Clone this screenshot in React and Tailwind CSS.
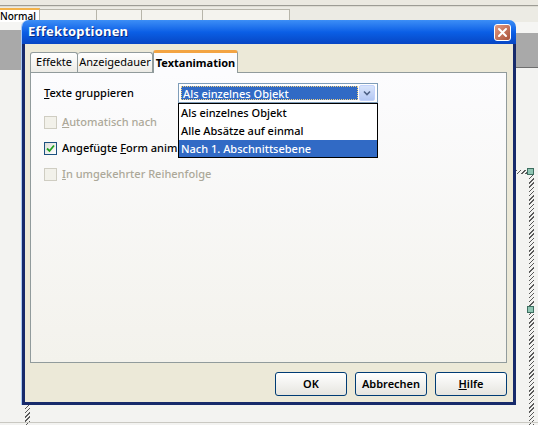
import React from "react";

const hatch =
  "bg-[repeating-linear-gradient(135deg,#5a5a5a_0px,#5a5a5a_1px,transparent_1px,transparent_3px)]";

function Checkbox({ checked, disabled }) {
  return (
    <div
      className={
        "w-[13px] h-[13px] shrink-0 border flex items-center justify-center " +
        (disabled
          ? "border-[#cfcdc2] bg-[#f2f1ea]"
          : "border-[#1c5180] bg-gradient-to-br from-[#dcdcd7] to-white")
      }
    >
      {checked && (
        <svg width="9" height="9" viewBox="0 0 9 9">
          <polyline points="1,4.5 3.5,7 8,1.5" fill="none" stroke="#21a121" strokeWidth="1.8" />
        </svg>
      )}
    </div>
  );
}

function CheckRow({ checked, disabled, children }) {
  return (
    <div className="h-[20px] flex items-center gap-[5px]">
      <Checkbox checked={checked} disabled={disabled} />
      <span className={disabled ? "text-[#aca899]" : "text-black"}>{children}</span>
    </div>
  );
}

function Button({ children }) {
  return (
    <button className="w-[72px] h-[24px] rounded-[3px] border border-[#003c74] bg-gradient-to-b from-white to-[#e6e5df] text-[11px] font-semibold text-black flex items-center justify-center">
      {children}
    </button>
  );
}

export default function App() {
  const tabs = [
    { w: "w-[57px]" },
    { w: "w-[45px]" },
    { w: "w-[61px]" },
    { w: "w-[87px]" },
  ];

  return (
    <div className="relative w-[538px] h-[425px] overflow-hidden bg-[#f3f3f1] font-['Noto_Sans','DejaVu_Sans',sans-serif] text-[11px]">
      {/* app behind the dialog */}
      <div className="h-[5px] bg-[#ebe9e1]" />
      <div className="h-[1px] bg-[#9d9c95]" />
      <div className="h-[1px] bg-[#dedcd3]" />
      <div className="h-[15px] flex items-end bg-[#ecebe4]">
        <div className="w-[40px] h-[14px] bg-white border-t-2 border-[#f2b24a] border-r border-r-[#b7b5aa] text-[10px] font-medium leading-[12px] overflow-hidden whitespace-nowrap">
          Normal
        </div>
        {tabs.map((t, i) => (
          <div key={i} className={t.w + " h-[13px] border-t border-r border-[#b7b5aa] bg-[#f4f3ee]"} />
        ))}
      </div>
      <div className="flex justify-between">
        <div className="w-[22px] flex flex-col">
          <div className="h-[8px] bg-[#f5f5f3]" />
          <div className="h-[40px] bg-[#a9a9a9]" />
        </div>
        <div className="w-[22px] flex flex-col">
          <div className="h-[11px] bg-[#f5f5f3]" />
          <div className="h-[35px] bg-[#a9a9a9] border-b border-[#6e6e6e]" />
        </div>
      </div>

      {/* selection frame on the slide canvas */}
      <div className={"absolute left-[529px] top-[170px] w-[5px] h-[255px] " + hatch} />
      <div className={"absolute left-[512px] top-[170px] w-[16px] h-[4px] " + hatch} />
      <div className="absolute left-[527px] top-[168px] w-[7px] h-[7px] bg-[#8fc5b3] border border-[#3d6e60]" />
      <div className="absolute left-[527px] top-[306px] w-[7px] h-[7px] bg-[#8fc5b3] border border-[#3d6e60]" />
      <div className={"absolute left-[25px] top-[404px] w-[5px] h-[21px] " + hatch} />
      <div className="absolute left-0 top-[422px] w-[538px] h-[1px] bg-[#c9c8c2]" />

      {/* dialog window */}
      <div className="absolute left-[22px] top-[20px] w-[494px] h-[385px] flex flex-col rounded-t-[7px] overflow-hidden shadow-[-1px_0_0_#a9c9f2]">
        <div className="h-[24px] shrink-0 flex items-center justify-between pl-[6px] pr-[5px] bg-gradient-to-b from-[#3c8ef6] via-[#0b5fe6] to-[#0746c4]">
          <span className="text-white font-bold text-[13px] tracking-[0.2px] [text-shadow:1px_1px_0_#0a2a80]">
            Effektoptionen
          </span>
          <div className="w-[17px] h-[17px] rounded-[3px] border border-white bg-gradient-to-br from-[#e49a82] to-[#a8523a] flex items-center justify-center">
            <svg width="11" height="11" viewBox="0 0 11 11">
              <path d="M2 2 L9 9 M9 2 L2 9" stroke="white" strokeWidth="2" strokeLinecap="round" />
            </svg>
          </div>
        </div>

        <div className="flex-1 flex flex-col bg-[#ece9d8] border-x-[3px] border-b-[3px] border-[#172a6b]">
          {/* tabs */}
          <div className="h-[28px] pt-[5px] pl-[5px] flex items-end">
            <div className="w-[48px] h-[20px] border border-b-0 border-[#919b9c] rounded-t-[3px] bg-gradient-to-b from-white to-[#ecebe6] flex items-center justify-center">
              Effekte
            </div>
            <div className="w-[75px] h-[20px] border border-b-0 border-l-0 border-[#919b9c] rounded-t-[3px] bg-gradient-to-b from-white to-[#ecebe6] flex items-center justify-center">
              Anzeigedauer
            </div>
            <div className="relative w-[85px] h-[23px] -mb-px z-10 border-x border-[#919b9c] border-t-[3px] border-t-[#f3a443] rounded-t-[3px] bg-[#fcfcfe] flex items-center justify-center font-bold">
              Textanimation
            </div>
          </div>

          {/* tab page */}
          <div className="relative ml-[5px] mr-[6px] h-[291px] border border-[#919b9c] bg-gradient-to-b from-[#fcfcfe] to-[#f3f2ec] pt-[10px] pl-[13px]">
            <div className="flex items-center h-[20px]">
              <span className="w-[134px] font-medium">
                <u>T</u>exte gruppieren
              </span>
              <div className="relative w-[200px] h-[20px] border border-[#7f9db9] bg-white flex items-center p-[2px]">
                <div className="flex-1 h-full bg-[#316ac5] border border-dotted border-[#f0d080] text-white font-medium leading-[14px] pl-[1px]">
                  Als einzelnes Objekt
                </div>
                <div className="w-[16px] h-[16px] ml-[1px] rounded-[2px] bg-gradient-to-b from-[#d8e4fb] to-[#b4c8f4] border border-[#c3d3fd] flex items-center justify-center">
                  <svg width="8" height="6" viewBox="0 0 8 6">
                    <path d="M1 1.5 L4 4.5 L7 1.5" fill="none" stroke="#4d6185" strokeWidth="1.6" />
                  </svg>
                </div>
                {/* open list */}
                <div className="absolute left-[-1px] top-[19px] w-[200px] border border-black bg-white z-20 font-medium">
                  <div className="h-[18px] pl-[2px] leading-[18px]">Als einzelnes Objekt</div>
                  <div className="h-[18px] pl-[2px] leading-[18px]">Alle Absätze auf einmal</div>
                  <div className="h-[17px] pl-[2px] leading-[17px] bg-[#316ac5] text-white">Nach 1. Abschnittsebene</div>
                </div>
              </div>
            </div>

            <div className="mt-[9px] flex flex-col gap-[6px] font-medium">
              <CheckRow disabled>
                <u>A</u>utomatisch nach
              </CheckRow>
              <CheckRow checked>
                <span className="block w-[116px] overflow-hidden whitespace-nowrap">
                  Angefügte <u>F</u>orm anim
                </span>
              </CheckRow>
              <CheckRow disabled>
                <u>I</u>n umgekehrter Reihenfolge
              </CheckRow>
            </div>
          </div>

          {/* buttons */}
          <div className="mt-[9px] pr-[6px] flex justify-end gap-[8px]">
            <Button>OK</Button>
            <Button>Abbrechen</Button>
            <Button>
              <u>H</u>ilfe
            </Button>
          </div>
        </div>
      </div>
    </div>
  );
}
